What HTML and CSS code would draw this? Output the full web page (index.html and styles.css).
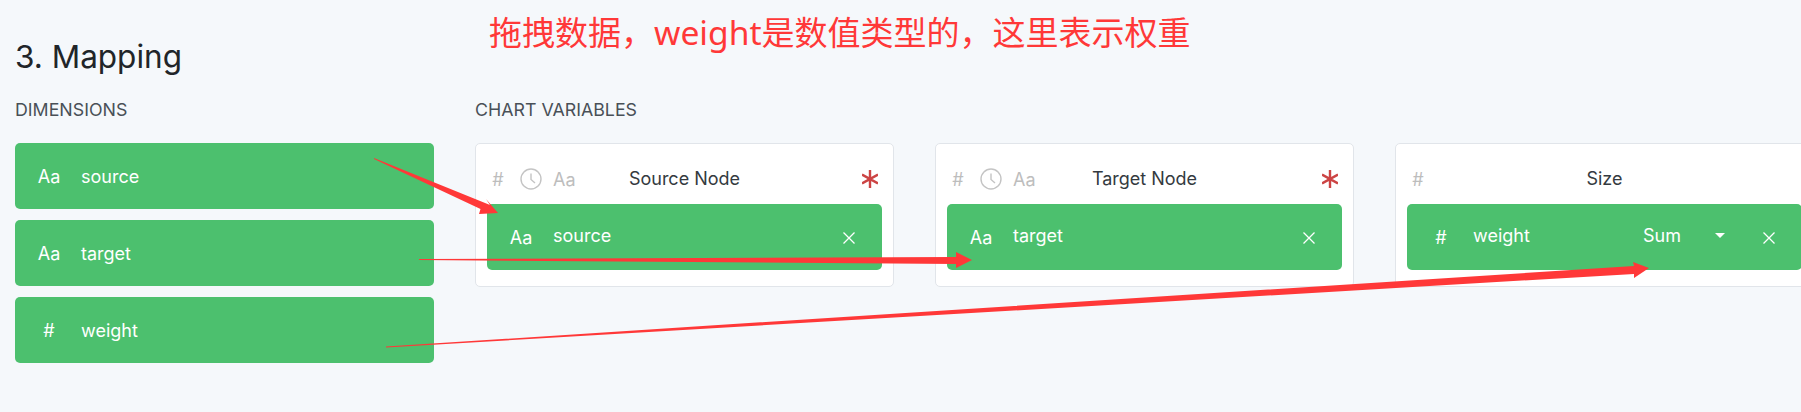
FILE: index.html
```html
<!DOCTYPE html>
<html lang="en">
<head>
    <meta charset="UTF-8">
    <meta name="viewport" content="width=device-width, initial-scale=1.0">
    <title>Mapping</title>
    <link rel="stylesheet" href="styles.css">
</head>
<body>
    <div class="note">拖拽数据，<span class="note-latin">weight</span>是数值类型的，这里表示权重</div>
    <h2 class="title">3. Mapping</h2>
    <div class="mapping">
        <div class="dimensions">
            <div class="label">DIMENSIONS</div>
            <div class="pill"><span class="type">Aa</span><span class="name">source</span></div>
            <div class="pill"><span class="type">Aa</span><span class="name">target</span></div>
            <div class="pill"><span class="type">#</span><span class="name">weight</span></div>
        </div>
        <div class="variables">
            <div class="label">CHART VARIABLES</div>
            <div class="cards">
                <div class="card">
                    <div class="card-head">
                        <div class="accepts">
                            <span class="type">#</span>
                            <svg class="clock" viewBox="0 0 22 22"><circle cx="11" cy="11" r="10"/><path d="M11 5.5V11.5L15 15"/></svg>
                            <span class="type">Aa</span>
                        </div>
                        <div class="card-title">Source Node</div>
                        <svg class="required" viewBox="0 0 16 18"><path d="M8 0V18M0 4.5L16 13.5M16 4.5L0 13.5"/></svg>
                    </div>
                    <div class="pill"><span class="type">Aa</span><span class="name">source</span>
                        <svg class="remove" viewBox="0 0 12 12"><path d="M0.5 0.5L11.5 11.5M11.5 0.5L0.5 11.5"/></svg>
                    </div>
                </div>
                <div class="card">
                    <div class="card-head">
                        <div class="accepts">
                            <span class="type">#</span>
                            <svg class="clock" viewBox="0 0 22 22"><circle cx="11" cy="11" r="10"/><path d="M11 5.5V11.5L15 15"/></svg>
                            <span class="type">Aa</span>
                        </div>
                        <div class="card-title">Target Node</div>
                        <svg class="required" viewBox="0 0 16 18"><path d="M8 0V18M0 4.5L16 13.5M16 4.5L0 13.5"/></svg>
                    </div>
                    <div class="pill"><span class="type">Aa</span><span class="name">target</span>
                        <svg class="remove" viewBox="0 0 12 12"><path d="M0.5 0.5L11.5 11.5M11.5 0.5L0.5 11.5"/></svg>
                    </div>
                </div>
                <div class="card">
                    <div class="card-head">
                        <div class="accepts">
                            <span class="type">#</span>
                        </div>
                        <div class="card-title">Size</div>
                    </div>
                    <div class="pill"><span class="type">#</span><span class="name">weight</span>
                        <span class="agg">Sum</span>
                        <span class="caret"></span>
                        <svg class="remove" viewBox="0 0 12 12"><path d="M0.5 0.5L11.5 11.5M11.5 0.5L0.5 11.5"/></svg>
                    </div>
                </div>
            </div>
        </div>
    </div>

    <svg class="arrows" width="1801" height="412" viewBox="0 0 1801 412">
        <polygon points="374,158 490,205 486,199 498,213 479,214 480.5,209 374,159"/>
        <polygon points="419,259 956,257 956,252 972,260 956,268 956,264 419,260"/>
        <polygon points="386,346.5 1634,266 1633,262 1649,268 1634,278 1634,274 386,347.5"/>
    </svg>
</body>
</html>
```
FILE: styles.css
```css
html, body {
    margin: 0;
    height: 100%;
}
body {
    position: relative;
    width: 1801px;
    height: 412px;
    overflow: hidden;
    box-sizing: border-box;
    padding: 38px 0 0 15px;
    background-color: #f5f8fb;
    font-family: Inter, "Noto Sans", sans-serif;
    font-size: 18px;
    color: #212529;
}
.title {
    margin: 0;
    font-size: 31.5px;
    font-weight: 400;
    line-height: 38px;
}
.mapping {
    display: flex;
    gap: 41px;
    margin-top: 22px;
}
.label {
    height: 24px;
    margin-bottom: 21px;
    font-size: 17.8px;
    line-height: 24px;
    color: #495057;
}
.dimensions {
    display: flex;
    flex-direction: column;
    width: 419px;
    flex: none;
}
.dimensions .pill {
    margin-bottom: 11px;
}
.cards {
    display: flex;
    gap: 41px;
}
.card {
    flex: none;
    width: 419px;
    height: 144px;
    box-sizing: border-box;
    padding: 0 11px;
    background-color: #fff;
    border: 1px solid #e1e5ea;
    border-radius: 5px;
}
.card-head {
    position: relative;
    display: flex;
    align-items: center;
    justify-content: center;
    height: 60px;
    box-sizing: border-box;
    padding-top: 10px;
}
.card-title {
    line-height: 24px;
    color: #343a40;
}
.accepts {
    position: absolute;
    left: 0;
    top: 10px;
    bottom: 0;
    display: flex;
    align-items: center;
    gap: 11px;
}
.accepts .type {
    width: 22px;
    margin: 0;
    color: #bdbdbd;
}
.clock {
    width: 22px;
    height: 22px;
    fill: none;
    stroke: #c4c4c4;
    stroke-width: 1.4;
}
.required {
    position: absolute;
    right: 4px;
    top: 26px;
    width: 16px;
    height: 18px;
    fill: none;
    stroke: #cc4444;
    stroke-width: 2.4;
}
.pill {
    display: flex;
    align-items: center;
    height: 66px;
    box-sizing: border-box;
    background-color: #4cc06e;
    border-radius: 5px;
    color: #fff;
}
.type {
    width: 36px;
    margin-left: 16px;
    flex: none;
    text-align: center;
}
.name {
    margin-left: 14px;
    flex: 1;
}
.card .name, .agg {
    margin-bottom: 3px;
}
.agg {
    margin-right: 34px;
}
.caret {
    width: 0;
    height: 0;
    margin-right: 38px;
    margin-bottom: 4px;
    border-left: 5px solid transparent;
    border-right: 5px solid transparent;
    border-top: 5px solid #fff;
}
.remove {
    flex: none;
    width: 12px;
    height: 12px;
    margin-top: 2px;
    margin-right: 27px;
    fill: none;
    stroke: #fff;
    stroke-width: 1.3;
}
.note {
    position: absolute;
    left: 489px;
    top: 10px;
    font-family: "Noto Sans", "Noto Sans CJK SC", sans-serif;
    font-size: 33px;
    line-height: 44px;
    color: #ff3838;
    white-space: nowrap;
}
.note-latin {
    font-size: 33.6px;
}
.arrows {
    position: absolute;
    left: 0;
    top: 0;
    fill: #ff3838;
}
```
